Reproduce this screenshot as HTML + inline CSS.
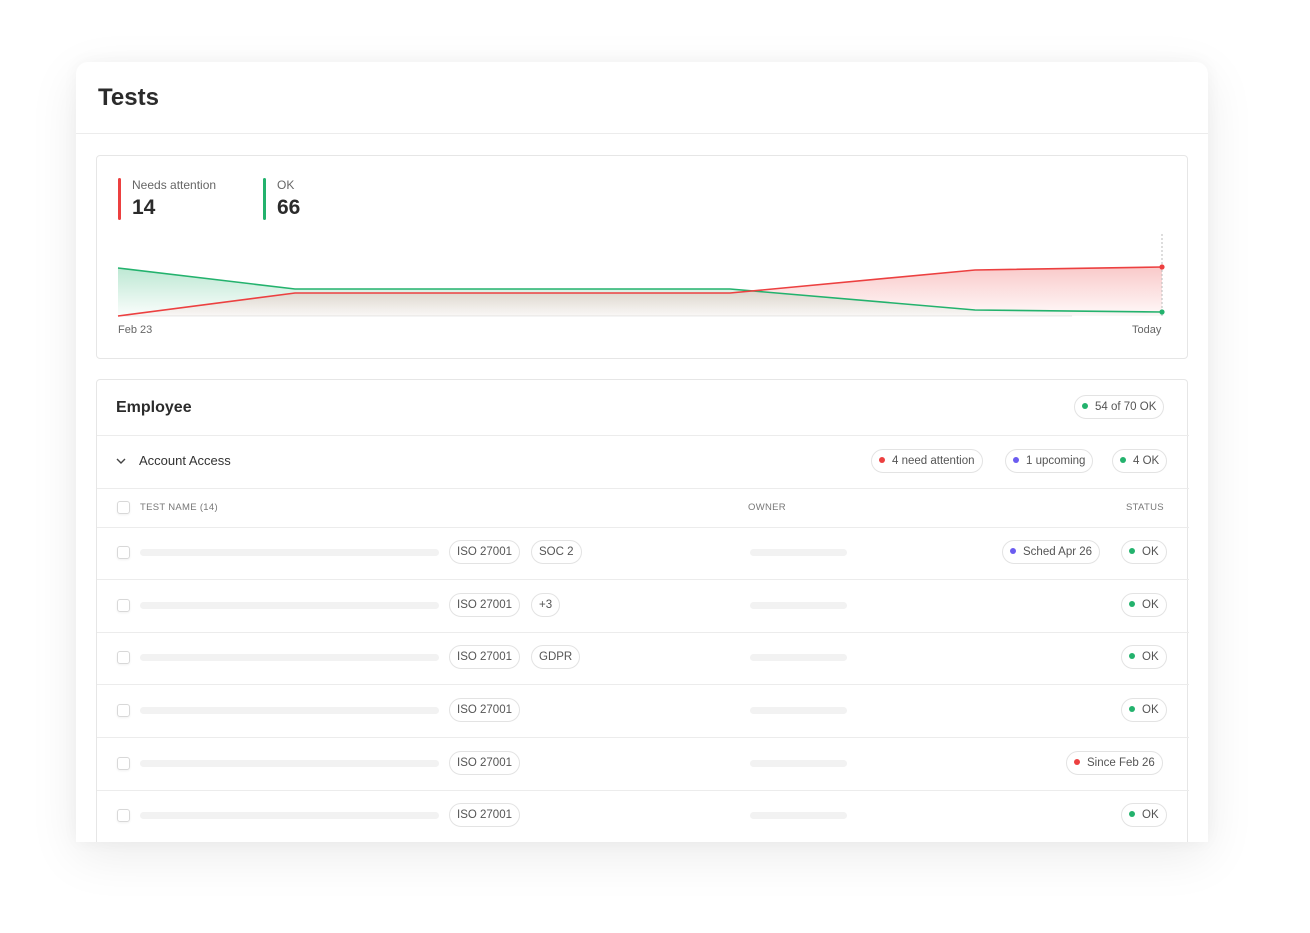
<!DOCTYPE html>
<html><head><style>
*{box-sizing:border-box;margin:0;padding:0}
body{width:1310px;height:933px;background:#fff;font-family:"Liberation Sans",Arial,sans-serif;position:relative;overflow:hidden;color:#333}
.a{position:absolute}
.card{left:76px;top:62px;width:1132px;height:780px;background:#fff;border-radius:12px 12px 0 0;box-shadow:0 14px 50px rgba(0,0,0,.08),0 0 16px rgba(0,0,0,.04);overflow:hidden}
.box{border:1px solid #e6e6e6;border-radius:4px;background:#fff}
.pill{position:absolute;height:24px;border:1px solid #e3e3e3;border-radius:12px;font-size:11.5px;color:#555;line-height:22px;padding:0 7px;white-space:nowrap}
.dot{display:inline-block;width:6px;height:6px;border-radius:50%;margin-right:7px;vertical-align:1px}
.g{background:#23b26d}.r{background:#ec4040}.p{background:#6b5cf0}
.hl{position:absolute;left:0;width:1092px;height:1px;background:#ececec}
.cb{position:absolute;left:20px;width:13px;height:13px;border:1px solid #d8d8d8;border-radius:3px;box-shadow:0 1px 2px rgba(0,0,0,.06)}
.bar{position:absolute;height:7px;background:#f2f2f2;border-radius:4px}
</style></head><body>
<div class="a card">
  <div class="a" style="left:22px;top:22px;font-size:24px;font-weight:bold;color:#2b2b2b">Tests</div>
  <div class="a" style="left:0;top:71px;width:1132px;height:1px;background:#ececec"></div>
  <div class="a box" style="left:20px;top:93px;width:1092px;height:204px">
    <div class="a" style="left:21px;top:22px;width:3px;height:42px;background:#ec4040;border-radius:2px"></div>
    <div class="a" style="left:35px;top:22px;font-size:12px;color:#666">Needs attention</div>
    <div class="a" style="left:35px;top:40px;font-size:21px;font-weight:bold;color:#2b2b2b">14</div>
    <div class="a" style="left:166px;top:22px;width:3px;height:42px;background:#23b26d;border-radius:2px"></div>
    <div class="a" style="left:180px;top:22px;font-size:12px;color:#666">OK</div>
    <div class="a" style="left:180px;top:40px;font-size:21px;font-weight:bold;color:#2b2b2b">66</div>
    <svg class="a" style="left:0;top:0" width="1092" height="204">
      <defs>
        <linearGradient id="gg" x1="0" y1="0" x2="0" y2="1"><stop offset="0" stop-color="#23b26d" stop-opacity=".3"/><stop offset="1" stop-color="#23b26d" stop-opacity=".02"/></linearGradient>
        <linearGradient id="rg" x1="0" y1="0" x2="0" y2="1"><stop offset="0" stop-color="#ec4040" stop-opacity=".28"/><stop offset="1" stop-color="#ec4040" stop-opacity=".03"/></linearGradient>
      </defs>
      <line x1="21" y1="160" x2="975" y2="160" stroke="#e8e8e8"/>
      <polygon points="21,112 198,133 633,133 878,154 1065,156 1065,160 21,160" fill="url(#gg)"/>
      <polygon points="21,160 198,137 633,137 878,114 1065,111 1065,160" fill="url(#rg)"/>
      <polyline points="21,112 198,133 633,133 878,154 1065,156" fill="none" stroke="#23b26d" stroke-width="1.6"/>
      <polyline points="21,160 198,137 633,137 878,114 1065,111" fill="none" stroke="#ec4040" stroke-width="1.6"/>
      <line x1="1065" y1="78" x2="1065" y2="160" stroke="#bbb" stroke-dasharray="2,2"/>
      <circle cx="1065" cy="111" r="2.6" fill="#ec4040"/>
      <circle cx="1065" cy="156" r="2.6" fill="#23b26d"/>
    </svg>
    <div class="a" style="left:21px;top:168px;font-size:11px;color:#666">Feb 23</div>
    <div class="a" style="left:1035px;top:168px;font-size:11px;color:#666">Today</div>
  </div>
  <div class="a box" style="left:20px;top:317px;width:1092px;height:500px">
    <div class="a" style="left:19px;top:19px;font-size:16px;font-weight:bold;color:#2b2b2b">Employee</div>
    <div class="pill" style="left:977px;top:15px"><span class="dot g"></span>54 of 70 OK</div>
    <div class="hl" style="top:55px"></div>
    <svg class="a" style="left:19px;top:77px" width="10" height="8"><path d="M1 2 L5 6 L9 2" fill="none" stroke="#444" stroke-width="1.4"/></svg>
    <div class="a" style="left:42px;top:73px;font-size:13px;color:#333">Account Access</div>
    <div class="pill" style="left:774px;top:69px"><span class="dot r"></span>4 need attention</div>
    <div class="pill" style="left:908px;top:69px"><span class="dot p"></span>1 upcoming</div>
    <div class="pill" style="left:1015px;top:69px"><span class="dot g"></span>4 OK</div>
    <div class="hl" style="top:108px"></div>
    <div class="cb" style="top:121px"></div>
    <div class="a" style="left:43px;top:122px;font-size:9.5px;color:#777;letter-spacing:.3px">TEST NAME (14)</div>
    <div class="a" style="left:651px;top:122px;font-size:9.5px;color:#777;letter-spacing:.3px">OWNER</div>
    <div class="a" style="left:1029px;top:122px;font-size:9.5px;color:#777;letter-spacing:.3px">STATUS</div>
    <div class="hl" style="top:147px"></div>

    <div class="cb" style="top:166px"></div><div class="bar" style="left:43px;top:169px;width:299px"></div>
    <div class="pill" style="left:352px;top:160px">ISO 27001</div><div class="pill" style="left:434px;top:160px">SOC 2</div>
    <div class="bar" style="left:653px;top:169px;width:97px"></div>
    <div class="pill" style="left:905px;top:160px"><span class="dot p"></span>Sched Apr 26</div>
    <div class="pill" style="left:1024px;top:160px"><span class="dot g"></span>OK</div>
    <div class="hl" style="top:199px"></div>

    <div class="cb" style="top:219px"></div><div class="bar" style="left:43px;top:222px;width:299px"></div>
    <div class="pill" style="left:352px;top:213px">ISO 27001</div><div class="pill" style="left:434px;top:213px">+3</div>
    <div class="bar" style="left:653px;top:222px;width:97px"></div>
    <div class="pill" style="left:1024px;top:213px"><span class="dot g"></span>OK</div>
    <div class="hl" style="top:252px"></div>

    <div class="cb" style="top:271px"></div><div class="bar" style="left:43px;top:274px;width:299px"></div>
    <div class="pill" style="left:352px;top:265px">ISO 27001</div><div class="pill" style="left:434px;top:265px">GDPR</div>
    <div class="bar" style="left:653px;top:274px;width:97px"></div>
    <div class="pill" style="left:1024px;top:265px"><span class="dot g"></span>OK</div>
    <div class="hl" style="top:304px"></div>

    <div class="cb" style="top:324px"></div><div class="bar" style="left:43px;top:327px;width:299px"></div>
    <div class="pill" style="left:352px;top:318px">ISO 27001</div>
    <div class="bar" style="left:653px;top:327px;width:97px"></div>
    <div class="pill" style="left:1024px;top:318px"><span class="dot g"></span>OK</div>
    <div class="hl" style="top:357px"></div>

    <div class="cb" style="top:377px"></div><div class="bar" style="left:43px;top:380px;width:299px"></div>
    <div class="pill" style="left:352px;top:371px">ISO 27001</div>
    <div class="bar" style="left:653px;top:380px;width:97px"></div>
    <div class="pill" style="left:969px;top:371px"><span class="dot r"></span>Since Feb 26</div>
    <div class="hl" style="top:410px"></div>

    <div class="cb" style="top:429px"></div><div class="bar" style="left:43px;top:432px;width:299px"></div>
    <div class="pill" style="left:352px;top:423px">ISO 27001</div>
    <div class="bar" style="left:653px;top:432px;width:97px"></div>
    <div class="pill" style="left:1024px;top:423px"><span class="dot g"></span>OK</div>
  </div>
</div>
</body></html>
